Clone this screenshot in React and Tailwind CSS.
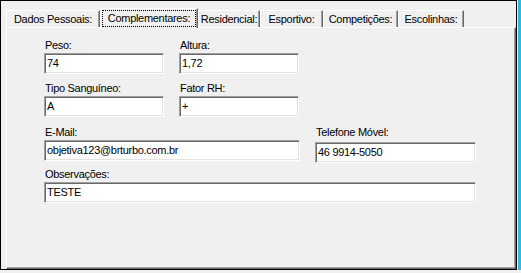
import React from "react";

const tabs = [
  { label: "Dados Pessoais:", w: 94 },
  { label: "Complementares:", w: 98, active: true },
  { label: "Residencial:", w: 62 },
  { label: "Esportivo:", w: 63 },
  { label: "Competições:", w: 75 },
  { label: "Escolinhas:", w: 66 },
];

function Edit({ value, w, className = "" }) {
  return (
    <div
      className={`h-[21px] bg-white border border-t-[#a0a0a0] border-l-[#a0a0a0] border-b-white border-r-white shadow-[inset_1px_1px_0_#696969,inset_-1px_-1px_0_#e3e3e3] flex items-center pl-[2px] text-black leading-[13px] ${className}`}
      style={{ width: w }}
    >
      {value}
    </div>
  );
}

function Field({ label, value, w, gap = 1, className = "" }) {
  return (
    <div className={`flex flex-col ${className}`}>
      <div className="h-[13px] leading-[13px] pl-[1px] text-black">{label}</div>
      <div style={{ height: gap }} />
      <Edit value={value} w={w} />
    </div>
  );
}

export default function App() {
  return (
    <div
      className="w-[521px] h-[273px] bg-[#f0f0f0] flex text-[11px] tracking-[-0.3px]"
      style={{ fontFamily: '"Liberation Sans", Arial, sans-serif' }}
    >
      <div className="w-[517px] h-[270px] border border-black flex flex-col pl-[5px]">
        {/* tabs */}
        <div className="h-[26px] flex items-end relative z-10">
          {tabs.map((t) =>
            t.active ? (
              <div
                key={t.label}
                className="h-[20px] -mb-[1px] bg-[#f0f0f0] border-t border-l border-t-white border-l-white border-r border-r-[#696969] shadow-[inset_-1px_0_0_#a0a0a0] flex items-start justify-center pt-[1px] px-[1px]"
                style={{ width: t.w }}
              >
                <div className="h-[17px] w-full border border-dotted border-black flex items-center justify-center leading-[13px]">
                  {t.label}
                </div>
              </div>
            ) : (
              <div
                key={t.label}
                className="h-[17px] border-t border-l border-t-white border-l-white border-r border-r-[#696969] shadow-[inset_-1px_0_0_#a0a0a0] flex items-center justify-center leading-[13px]"
                style={{ width: t.w }}
              >
                {t.label}
              </div>
            )
          )}
        </div>
        {/* page */}
        <div className="w-[510px] h-[242px] border-t border-l border-t-white border-l-white border-r border-b border-r-[#696969] border-b-[#696969] shadow-[inset_-1px_-1px_0_#a0a0a0] pt-[11px] pl-[37px] flex flex-col">
          <div className="flex gap-[15px]">
            <Field label="Peso:" value="74" w={120} />
            <Field label="Altura:" value="1,72" w={120} />
          </div>
          <div className="flex gap-[15px] mt-[8px]">
            <Field label="Tipo Sanguíneo:" value="A" w={120} />
            <Field label="Fator RH:" value="+" w={120} />
          </div>
          <div className="flex gap-[15px] mt-[9px]">
            <Field label="E-Mail:" value="objetiva123@brturbo.com.br" w={256} />
            <Field label="Telefone Móvel:" value="46 9914-5050" w={161} gap={3} />
          </div>
          <div className="flex mt-[5px]">
            <Field label="Observações:" value="TESTE" w={432} />
          </div>
        </div>
      </div>
      <div className="w-[1px]" />
      <div className="w-[3px] h-[270px] bg-[#33b5e5]" />
    </div>
  );
}
